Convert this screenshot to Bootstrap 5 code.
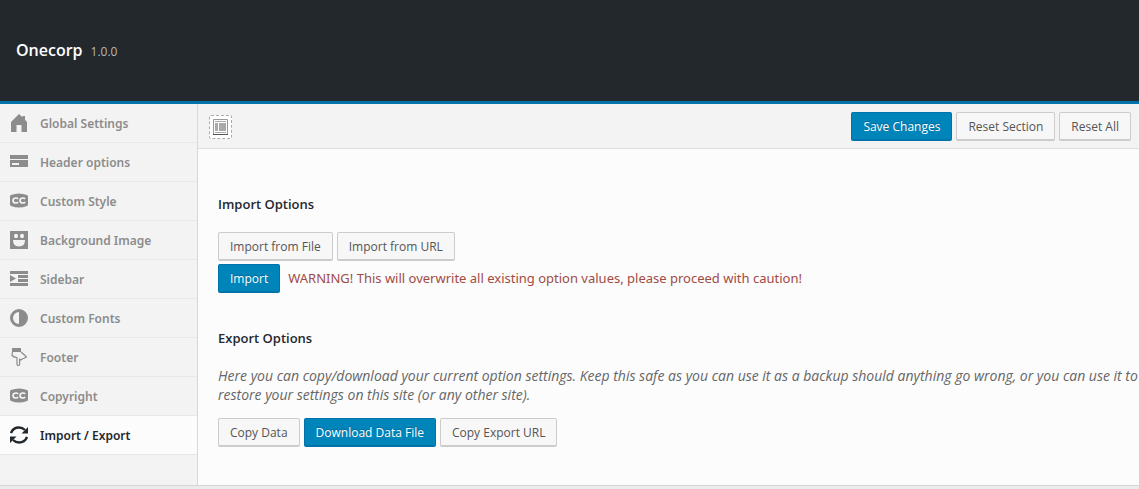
<!DOCTYPE html>
<html lang="en">
<head>
<meta charset="utf-8">
<meta name="viewport" content="width=device-width, initial-scale=1">
<title>Onecorp – Import / Export</title>
<link href="https://cdn.jsdelivr.net/npm/bootstrap@5.3.0/dist/css/bootstrap.min.css" rel="stylesheet">
<style>
  body { font-family: "Open Sans", "Noto Sans", sans-serif; font-size: 13px; line-height: 19px; color: #555; background: #ebebeb; }
  .app-head { background: #23282d; border-bottom: 3px solid #0073aa; padding: 38px 16px 39px; }
  .app-head h1 { font-size: 16px; line-height: 24px; font-weight: 600; }
  .version { font-size: 12px; color: #b4b9be; }
  .app-body { border-bottom: 1px solid #d5d5d5; background: #fcfcfc; }
  .side { width: 198px; background: #f3f3f3; border-right: 1px solid #d8d8d8; }
  .side .nav-link { display: flex; align-items: center; gap: 12px; height: 39px; padding: 0 10px; font-family: "Noto Sans", "Open Sans", sans-serif; font-size: 12px; font-weight: 600; color: #8c8c8c; border-bottom: 1px solid #e7e7e7; }
  .side .nav-link.active { background: #fcfcfc; color: #23282d; }
  .side svg { width: 18px; height: 18px; fill: currentColor; flex: none; }
  .tools { background: #f3f3f3; border-bottom: 1px solid #dedede; padding: 8px 8px 7px 11px; }
  .btn { --bs-btn-font-size: 12px; --bs-btn-line-height: 18px; --bs-btn-padding-x: 11px; padding-top: 5px; padding-bottom: 3px; --bs-btn-border-radius: 2px; border-bottom-width: 2px; white-space: nowrap; }
  .btn-plain { --bs-btn-color: #555; --bs-btn-bg: #f7f7f7; --bs-btn-border-color: #ccc; --bs-btn-hover-bg: #fafafa; --bs-btn-hover-border-color: #999; }
  .btn-main { --bs-btn-color: #fff; --bs-btn-bg: #0085ba; --bs-btn-border-color: #0073aa; --bs-btn-hover-color: #fff; --bs-btn-hover-bg: #008ec2; --bs-btn-hover-border-color: #006799; text-shadow: 0 -1px 1px #006799; }
  .btn-expand { width: 23px; height: 24px; padding: 0; background: #fff; border: 1px dashed #aaa; border-radius: 2px; display: grid; place-items: center; }
  .panel { padding: 46px 0 38px 20px; }
  .panel h2 { font-size: 13px; line-height: 19px; font-weight: 600; color: #23282d; margin-bottom: 18px; }
  .row-gap { gap: 4px; }
  .import-row { margin-top: 3px; }
  .warning { font-family: "Noto Sans", "Open Sans", sans-serif; color: #a04b44; }
  .export { margin-top: 36px; }
  .export p { font-size: 14px; color: #666; margin-bottom: 14px; }
</style>
</head>
<body>
<svg class="d-none" xmlns="http://www.w3.org/2000/svg">
  <symbol id="cc" viewBox="0 0 18 18">
    <path fill-rule="evenodd" d="M1 3Q9 0 17 3Q18 3 18 5V12Q18 14 17 14Q9 17 1 14Q0 14 0 12V5Q0 3 1 3Z"/>
    <path d="M8 7Q7.500 6 6 6Q3 6 3 8.500T6 11Q7.500 11 8 10M15 7Q14.500 6 13 6Q10 6 10 8.500T13 11Q14.500 11 15 10" fill="none" stroke="#f3f3f3" stroke-width="1.700"/>
  </symbol>
</svg>
<header class="app-head d-flex align-items-baseline gap-2">
  <h1 class="text-white mb-0">Onecorp</h1>
  <span class="version">1.0.0</span>
</header>
<div class="app-body d-flex">
  <nav class="side nav flex-column flex-nowrap flex-shrink-0" aria-label="Sections">
    <a class="nav-link" href="#global"><svg viewBox="0 0 18 18"><path d="M9 0 12.500 3.300V2H15V5.800L17 8V18H11.500V11H6.500V18H1V8Z"/></svg>Global Settings</a>
    <a class="nav-link" href="#header"><svg viewBox="0 0 18 18"><path fill-rule="evenodd" d="M0 2H18V6H0ZM0 7H18V14H0ZM2 10V12H9V10Z"/></svg>Header options</a>
    <a class="nav-link" href="#style"><svg><use href="#cc"/></svg>Custom Style</a>
    <a class="nav-link" href="#background"><svg viewBox="0 0 18 18"><path fill-rule="evenodd" d="M0 0H18V18H0ZM4 5A2 2.300 0 0 0 8 5A2 2.300 0 0 0 4 5M10 5A2 2.300 0 0 0 14 5A2 2.300 0 0 0 10 5M3 9Q3 15.500 9 15.500T15 9Z"/></svg>Background Image</a>
    <a class="nav-link" href="#sidebar"><svg viewBox="0 0 18 18"><path d="M0 1H18V4H0ZM8 5H18V8H8ZM8 9H18V12H8ZM0 13H18V16H0ZM0 5 6 8.500 0 12Z"/></svg>Sidebar</a>
    <a class="nav-link" href="#fonts"><svg viewBox="0 0 18 18"><path fill-rule="evenodd" d="M9 0A9 9 0 1 1 9 18A9 9 0 1 1 9 0M9 3A6 6 0 0 0 9 15Z"/></svg>Custom Fonts</a>
    <a class="nav-link" href="#footer"><svg viewBox="0 0 18 18"><path d="M2 0H11V4H2Z"/><path d="M2.500 4 2 7.500Q4 9.500 7 9.500V16Q7 17.500 8.300 17.500T9.600 16V11L11 12 12.500 10.800 14 10.300 16.500 9 15 7.500 11 4" fill="none" stroke="currentColor" stroke-width="1.200" stroke-linejoin="round"/></svg>Footer</a>
    <a class="nav-link" href="#copyright"><svg><use href="#cc"/></svg>Copyright</a>
    <a class="nav-link active" aria-current="page" href="#import"><svg viewBox="0 0 18 18"><path d="M1 7Q3 1.500 9 1.500Q12.500 1.500 15 4M17 11Q15 16.500 9 16.500Q5.500 16.500 3 14" fill="none" stroke="currentColor" stroke-width="2.400"/><path d="M18 1V7.500H11.500ZM0 17V10.500H6.500Z"/></svg>Import / Export</a>
  </nav>
  <main class="flex-grow-1">
    <div class="tools d-flex align-items-center justify-content-between">
      <button type="button" class="btn-expand" aria-label="Expand options">
        <svg width="15" height="16" viewBox="0 0 15 16"><path d="M.5 15.500V.5H14.500V15.500" fill="none" stroke="#999"/><path d="M0 15H15V16H0Z" fill="#555"/><path d="M2 2H13V3H2ZM2 4H5V12H2ZM6 4H13V12H6ZM2 13H13V14H2Z" fill="#aaa"/></svg>
      </button>
      <div class="d-flex row-gap">
        <button type="button" class="btn btn-main">Save Changes</button>
        <button type="button" class="btn btn-plain">Reset Section</button>
        <button type="button" class="btn btn-plain">Reset All</button>
      </div>
    </div>
    <div class="panel">
      <section>
        <h2>Import Options</h2>
        <div class="d-flex flex-wrap row-gap">
          <button type="button" class="btn btn-plain">Import from File</button>
          <button type="button" class="btn btn-plain">Import from URL</button>
        </div>
        <div class="import-row d-flex align-items-center gap-2">
          <button type="button" class="btn btn-main">Import</button>
          <span class="warning">WARNING! This will overwrite all existing option values, please proceed with caution!</span>
        </div>
      </section>
      <section class="export">
        <h2>Export Options</h2>
        <p class="fst-italic">Here you can copy/download your current option settings. Keep this safe as you can use it as a backup should anything go wrong, or you can use it to restore your settings on this site (or any other site).</p>
        <div class="d-flex flex-wrap row-gap">
          <button type="button" class="btn btn-plain">Copy Data</button>
          <button type="button" class="btn btn-main">Download Data File</button>
          <button type="button" class="btn btn-plain">Copy Export URL</button>
        </div>
      </section>
    </div>
  </main>
</div>
<script src="https://cdn.jsdelivr.net/npm/bootstrap@5.3.0/dist/js/bootstrap.bundle.min.js"></script>
</body>
</html>
